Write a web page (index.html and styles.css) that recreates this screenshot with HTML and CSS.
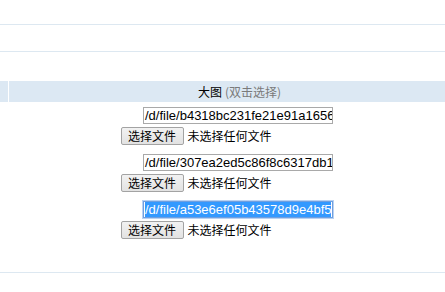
FILE: index.html
```html
<!DOCTYPE html>
<html lang="zh-CN">
<head>
<meta charset="utf-8">
<title>大图</title>
<link rel="stylesheet" href="styles.css">
</head>
<body>
<div class="page">
  <div class="row row-a"></div>
  <div class="row row-b"></div>
  <div class="spacer"></div>
  <div class="head">
    <div class="head-side"></div>
    <div class="head-main">大图 <span class="hint">(双击选择)</span></div>
  </div>
  <div class="uploads">
    <div class="item">
      <div class="path">/d/file/b4318bc231fe21e91a16565</div>
      <div class="file"><span class="btn">选择文件</span><span class="status">未选择任何文件</span></div>
    </div>
    <div class="item">
      <div class="path">/d/file/307ea2ed5c86f8c6317db1c</div>
      <div class="file"><span class="btn">选择文件</span><span class="status">未选择任何文件</span></div>
    </div>
    <div class="item">
      <div class="path path-focus"><span class="sel">/d/file/a53e6ef05b43578d9e4bf53</span></div>
      <div class="file"><span class="btn">选择文件</span><span class="status">未选择任何文件</span></div>
    </div>
  </div>
</div>
</body>
</html>
```
FILE: styles.css
```css
html, body {
  margin: 0;
  padding: 0;
  overflow: hidden;
  background: #fff;
}
body {
  font-family: "Liberation Sans", "Noto Sans CJK SC", sans-serif;
  font-size: 12px;
  color: #000;
}
.page {
  width: 470px;
  display: flex;
  flex-direction: column;
}
.row {
  border-bottom: 1px solid #dde8f1;
}
.row-a { height: 24px; }
.row-b { height: 26px; }
.spacer { height: 29px; }
.head {
  height: 21px;
  display: grid;
  grid-template-columns: 8px 1fr;
  column-gap: 1px;
}
.head-side, .head-main {
  background: #dce8f3;
}
.head-main {
  display: flex;
  align-items: center;
  justify-content: center;
  font-family: "Noto Sans CJK SC", sans-serif;
  font-size: 12px;
  line-height: 21px;
  color: #000;
}
.hint {
  color: #7a7a7a;
  margin-left: 3px;
}
.uploads {
  height: 171px;
  padding: 5px 0 0 9px;
  box-sizing: border-box;
  border-bottom: 1px solid #dde8f1;
  display: flex;
  flex-direction: column;
  gap: 9px;
}
.item {
  display: flex;
  flex-direction: column;
  align-items: center;
  gap: 3px;
}
.path {
  width: 190px;
  height: 17px;
  box-sizing: border-box;
  border: 1px solid #a9a9a9;
  padding: 0 1px;
  font-family: "Liberation Sans", sans-serif;
  font-size: 13px;
  line-height: 15px;
  white-space: nowrap;
  overflow: hidden;
  margin-right: 3px;
}
.path-focus {
  border-color: #6f9fe0;
  box-shadow: 0 0 0 1px #b9d2f3;
}
.sel {
  display: block;
  background: #3399ff;
  color: #fff;
}
.file {
  width: 238px;
  height: 18px;
  display: flex;
  align-items: center;
  font-family: "Noto Sans CJK SC", sans-serif;
  font-size: 12px;
}
.btn {
  height: 18px;
  width: 63px;
  box-sizing: border-box;
  border: 1px solid #a3a3a3;
  border-radius: 2px;
  background: linear-gradient(#f2f2f2, #e2e2e2);
  display: flex;
  align-items: center;
  justify-content: center;
  line-height: 16px;
  color: #000;
}
.status {
  margin-left: 4px;
  line-height: 18px;
}
```
